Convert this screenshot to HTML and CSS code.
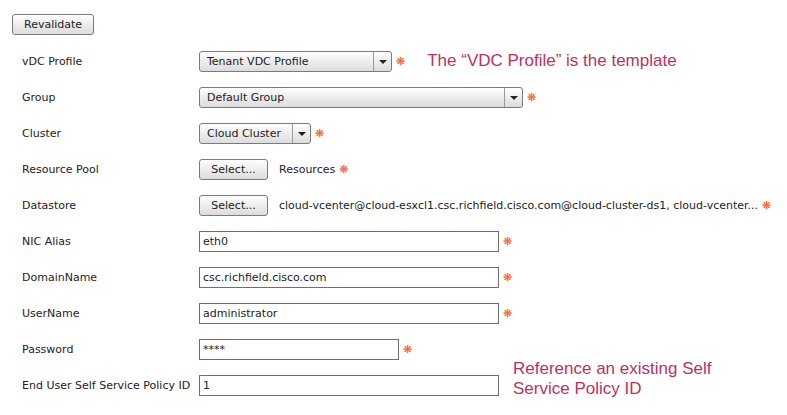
FILE: index.html
```html
<!DOCTYPE html>
<html lang="en">

<head>
  <meta charset="UTF-8">
  <title>vDC Settings</title>
  <link rel="stylesheet" href="styles.css">
</head>

<body>
  <!-- Top toolbar with the revalidate button -->
  <div class="toolbar">
    <button type="button" class="btn">Revalidate</button>
  </div>

  <!-- The settings form, one row per field -->
  <form class="settings">

    <div class="row">
      <label>vDC Profile</label>
      <div class="field">
        <div class="select select-profile">
          <span class="select-value">Tenant VDC Profile</span>
          <span class="select-arrow"></span>
        </div>
        <span class="req">❋</span>
        <span class="note note-profile">The “VDC Profile” is the template</span>
      </div>
    </div>

    <div class="row">
      <label>Group</label>
      <div class="field">
        <div class="select select-group">
          <span class="select-value">Default Group</span>
          <span class="select-arrow"></span>
        </div>
        <span class="req">❋</span>
      </div>
    </div>

    <div class="row">
      <label>Cluster</label>
      <div class="field">
        <div class="select select-cluster">
          <span class="select-value">Cloud Cluster</span>
          <span class="select-arrow"></span>
        </div>
        <span class="req">❋</span>
      </div>
    </div>

    <div class="row">
      <label>Resource Pool</label>
      <div class="field">
        <button type="button" class="btn btn-select">Select...</button>
        <span class="picked">Resources</span>
        <span class="req">❋</span>
      </div>
    </div>

    <div class="row">
      <label>Datastore</label>
      <div class="field">
        <button type="button" class="btn btn-select">Select...</button>
        <span class="picked">cloud-vcenter@cloud-esxcl1.csc.richfield.cisco.com@cloud-cluster-ds1, cloud-vcenter...</span>
        <span class="req">❋</span>
      </div>
    </div>

    <div class="row">
      <label>NIC Alias</label>
      <div class="field">
        <input type="text" class="text" value="eth0">
        <span class="req">❋</span>
      </div>
    </div>

    <div class="row">
      <label>DomainName</label>
      <div class="field">
        <input type="text" class="text" value="csc.richfield.cisco.com">
        <span class="req">❋</span>
      </div>
    </div>

    <div class="row">
      <label>UserName</label>
      <div class="field">
        <input type="text" class="text" value="administrator">
        <span class="req">❋</span>
      </div>
    </div>

    <div class="row">
      <label>Password</label>
      <div class="field">
        <input type="text" class="text text-short" value="****">
        <span class="req">❋</span>
      </div>
    </div>

    <div class="row">
      <label>End User Self Service Policy ID</label>
      <div class="field">
        <input type="text" class="text" value="1">
        <span class="note note-policy">Reference an existing Self Service Policy ID</span>
      </div>
    </div>

  </form>
</body>

</html>
```

FILE: styles.css
```css
/* Page reset and base font */
body {
  margin: 0;
  padding: 0;
  font-family: "DejaVu Sans", Verdana, sans-serif;
  font-size: 11px;
  color: #222;
  background: #fff;
}

/* Revalidate bar */
.toolbar {
  padding: 14px 0 0 12px;
  height: 29px;
}

/* Common gray gradient button */
.btn {
  height: 21px;
  padding: 0 11px;
  border: 1px solid #7a7a7a;
  border-radius: 3px;
  background: linear-gradient(#fefefe, #dcdcdc);
  font-family: inherit;
  font-size: 11px;
  color: #222;
}

.btn-select {
  width: 69px;
  padding: 0;
}

/* Each form row: label column + field column */
.settings {
  padding-left: 22px;
}

.row {
  display: grid;
  grid-template-columns: 177px auto;
  align-items: center;
  height: 36px;
}

.row label {
  white-space: nowrap;
}

.field {
  display: flex;
  align-items: center;
}

/* Fake drop-down boxes */
.select {
  display: flex;
  height: 21px;
  box-sizing: border-box;
  border: 1px solid #7a7a7a;
  border-radius: 3px;
  background: linear-gradient(#fefefe, #dcdcdc);
}

.select-profile { width: 193px; }
.select-group { width: 324px; }
.select-cluster { width: 112px; }

.select-value {
  flex: 1;
  padding-left: 7px;
  line-height: 19px;
  white-space: nowrap;
}

.select-arrow {
  width: 17px;
  border-left: 1px solid #9a9a9a;
  position: relative;
}

/* Small black triangle inside the arrow box */
.select-arrow::after {
  content: "";
  position: absolute;
  left: 5px;
  top: 8px;
  border-left: 4px solid transparent;
  border-right: 4px solid transparent;
  border-top: 4px solid #222;
}

/* Text inputs */
.text {
  width: 300px;
  height: 21px;
  box-sizing: border-box;
  margin: 0;
  padding: 0 3px;
  border: 1px solid #6f6f6f;
  font-family: inherit;
  font-size: 11px;
  color: #222;
}

.text-short {
  width: 200px;
}

/* Text that shows the selected resources */
.picked {
  margin-left: 11px;
  white-space: nowrap;
}

/* Required marker */
.req {
  margin-left: 4px;
  color: #ff5520;
  font-size: 11px;
}

/* Red annotation notes */
.note {
  font-family: "Liberation Sans", Arial, sans-serif;
  font-size: 17px;
  line-height: 20px;
  color: #c0305e;
}

.note-profile {
  margin-left: 22px;
}

.note-policy {
  width: 230px;
  margin-left: 14px;
  align-self: flex-start;
  margin-top: -13px;
}
```
